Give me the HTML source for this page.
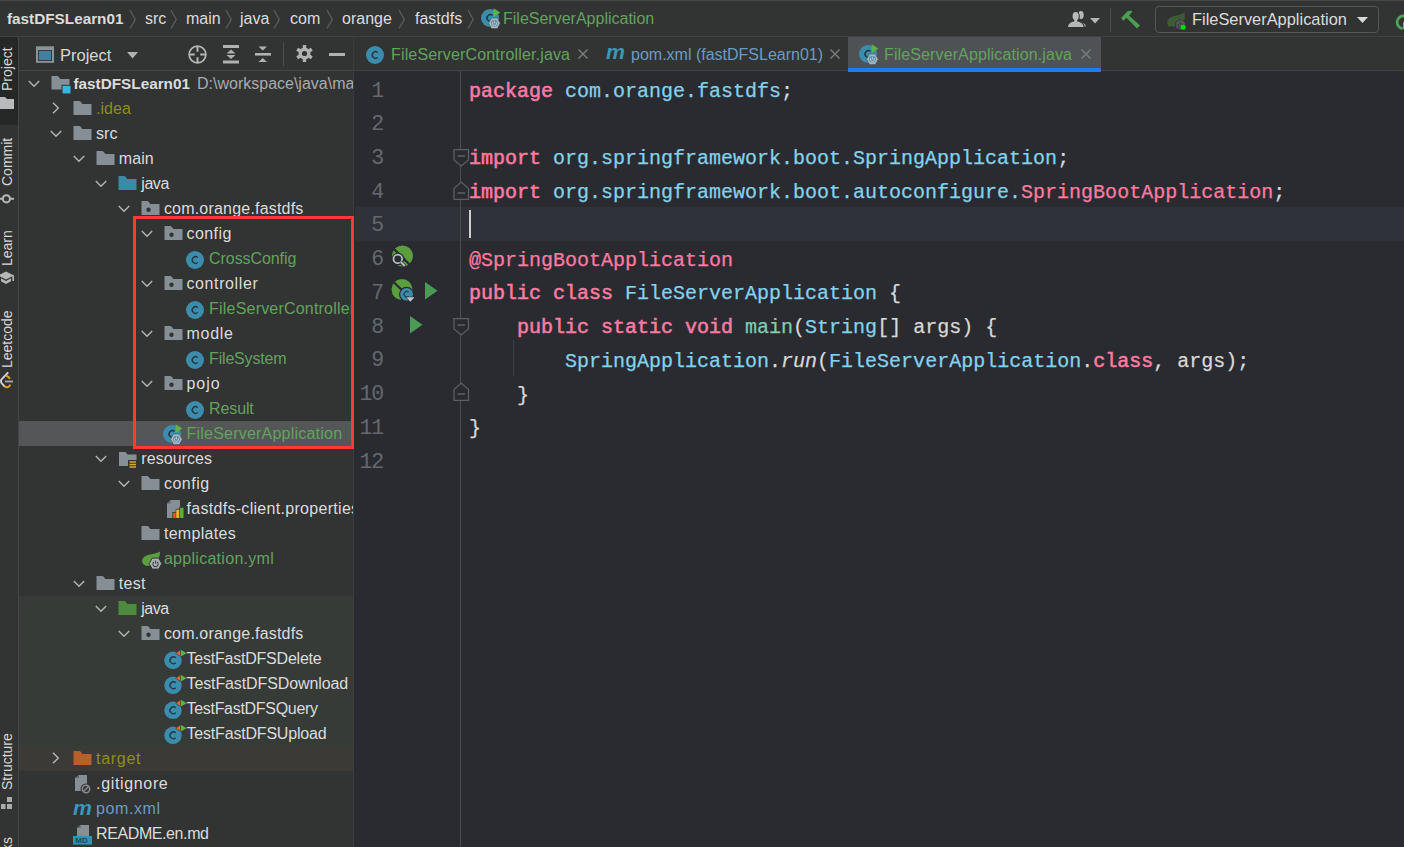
<!DOCTYPE html>
<html><head><meta charset="utf-8">
<style>
*{margin:0;padding:0;box-sizing:border-box}
html,body{width:1404px;height:847px;overflow:hidden;background:#323333}
body{position:relative;font-family:"Liberation Sans",sans-serif;font-size:16px;color:#d6d6d6}
.abs{position:absolute}
#nav{left:0;top:0;width:1404px;height:36px;background:#323433;border-top:1px solid #474747}
#navsep{left:0;top:36px;width:1404px;height:1px;background:#3f4142}
.crumb{position:absolute;top:7px;line-height:22px;font-size:16px;color:#dcdcdc;white-space:nowrap}
.chev{position:absolute;top:9px;width:8px;height:19px;margin-left:-1px}
#strip{left:0;top:37px;width:18px;height:810px;background:#323433}
#stripsep{left:18px;top:37px;width:1px;height:810px;background:#444647}
.vt{position:absolute;left:0px;transform-origin:0 0;transform:rotate(-90deg);font-size:14px;color:#d8d8d8;white-space:nowrap;line-height:14px}
#proj{left:19px;top:37px;width:335px;height:810px;background:#323333;overflow:hidden}
#projhead{left:0;top:0;width:335px;height:34px;border-bottom:1px solid #434547}
#projsep{left:353px;top:37px;width:1px;height:810px;background:#3b3c3e}
.row{position:absolute;left:0;width:335px;height:25px}
.row .t{position:absolute;top:2px;line-height:21px;font-size:16px;white-space:nowrap}
.row svg{position:absolute}
#editor{left:355px;top:37px;width:1049px;height:810px;background:#2a2b30}
#tabs{left:0;top:0;width:1049px;height:34px;background:#323433;border-bottom:1px solid #414344}
.tab{position:absolute;top:0;height:33px}
#tabs .t{position:absolute;top:7px;line-height:22px;font-size:16px;white-space:nowrap}
.code{-webkit-text-stroke:0.25px currentColor;position:absolute;left:114px;font-family:"Liberation Mono",monospace;font-size:20px;line-height:33.73px;white-space:pre;color:#d8d8d8}
.ln{position:absolute;width:40px;text-align:right;font-family:"Liberation Mono",monospace;font-size:21.5px;letter-spacing:-1.1px;line-height:33.73px;color:#65686e}
.kw{color:#ff7aa2;-webkit-text-stroke:0.55px currentColor}
.pk{color:#82d2ee}
.an{color:#ff7aa2}
.fn{color:#7fcfae}
.it{font-style:italic}
</style></head><body>

<!-- NAV BAR -->
<div id="nav" class="abs">
  <div class="crumb" style="left:7px;font-weight:bold;font-size:15.3px">fastDFSLearn01</div>
  <svg class="chev" style="left:130px" viewBox="0 0 8 19"><path d="M1 0.3 L6.3 9.4 L1 18.5" fill="none" stroke="#5c5f61" stroke-width="1.2"/></svg>
  <div class="crumb" style="left:145px">src</div>
  <svg class="chev" style="left:171px" viewBox="0 0 8 19"><path d="M1 0.3 L6.3 9.4 L1 18.5" fill="none" stroke="#5c5f61" stroke-width="1.2"/></svg>
  <div class="crumb" style="left:186px">main</div>
  <svg class="chev" style="left:226px" viewBox="0 0 8 19"><path d="M1 0.3 L6.3 9.4 L1 18.5" fill="none" stroke="#5c5f61" stroke-width="1.2"/></svg>
  <div class="crumb" style="left:240px">java</div>
  <svg class="chev" style="left:274px" viewBox="0 0 8 19"><path d="M1 0.3 L6.3 9.4 L1 18.5" fill="none" stroke="#5c5f61" stroke-width="1.2"/></svg>
  <div class="crumb" style="left:290px">com</div>
  <svg class="chev" style="left:327px" viewBox="0 0 8 19"><path d="M1 0.3 L6.3 9.4 L1 18.5" fill="none" stroke="#5c5f61" stroke-width="1.2"/></svg>
  <div class="crumb" style="left:342px">orange</div>
  <svg class="chev" style="left:399px" viewBox="0 0 8 19"><path d="M1 0.3 L6.3 9.4 L1 18.5" fill="none" stroke="#5c5f61" stroke-width="1.2"/></svg>
  <div class="crumb" style="left:415px">fastdfs</div>
  <svg class="chev" style="left:468px" viewBox="0 0 8 19"><path d="M1 0.3 L6.3 9.4 L1 18.5" fill="none" stroke="#5c5f61" stroke-width="1.2"/></svg>
  <svg class="abs" style="left:481px;top:7px" width="22" height="22" viewBox="0 0 22 22"><circle cx="9" cy="10" r="9" fill="#3c8dad"/><path d="M11.6 7.4 A3.4 3.4 0 1 0 11.6 12.6" fill="none" stroke="#22343e" stroke-width="1.4"/><path d="M12.6 0.2 L19.3 4.6 L12.6 8.9 Z" fill="#5fb246"/><path d="M7.6 15.3 L10.5 10.1 L16.3 10.1 L19.2 15.3 L16.3 20.5 L10.5 20.5 Z" fill="#aeb6bc" stroke="#3a4a52" stroke-width="0.5"/><circle cx="13.4" cy="15.3" r="3.3" fill="#3c8dad"/><path d="M12.1 14 A2 2 0 1 0 14.7 14 M13.4 12.6 V15.4" fill="none" stroke="#b8c0c6" stroke-width="1.1"/></svg>
  <div class="crumb" style="left:503px;color:#62a35c">FileServerApplication</div>

  <!-- right toolbar -->
  <svg class="abs" style="left:1067px;top:8px" width="20" height="20" viewBox="0 0 20 20">
    <ellipse cx="14" cy="6" rx="2.7" ry="4" fill="#b5b7b9"/><path d="M11.5 12.2 Q16.5 12.6 19 17 L17 17.8 L12 17.8 Z" fill="#b5b7b9"/>
    <g fill="#323433" stroke="#323433" stroke-width="2.2"><ellipse cx="8.7" cy="7.2" rx="3.1" ry="4.1"/><path d="M1 18 Q1.2 13.4 6.8 12.4 H10.6 Q16.2 13.4 16.6 18 Z"/></g>
    <g fill="#b5b7b9"><ellipse cx="8.7" cy="7.2" rx="3.1" ry="4.1"/><rect x="7.3" y="10" width="2.8" height="3"/><path d="M1 18 Q1.2 13.4 6.8 12.4 H10.6 Q16.2 13.4 16.6 18 Z"/></g>
  </svg>
  <svg class="abs" style="left:1090px;top:17px" width="10" height="6" viewBox="0 0 10 6"><path d="M0 0 H10 L5 5.5 Z" fill="#b4b6b8"/></svg>
  <div class="abs" style="left:1110px;top:7px;width:1px;height:24px;background:#4b4d4f"></div>
  <svg class="abs" style="left:1120px;top:9px" width="21" height="20" viewBox="0 0 21 20">
    <path d="M1.1 8.1 L3.3 10.7 L6.5 7.8 L17 18.6 L20 15.6 L9 5.6 L12.2 1.9 L11.6 0.8 L7.8 1.1 Z" fill="#4b9e52"/>
  </svg>
  <div class="abs" style="left:1155px;top:5px;width:224px;height:27px;border:1px solid #555759;border-radius:4px;background:#313333"></div>
  <svg class="abs" style="left:1166px;top:10px" width="22" height="21" viewBox="0 0 22 21">
    <path d="M2.5 15.5 C-0.5 11 2 6 8.5 5 C13 4.3 16 3 18.6 1.5 L18.8 8 Q17 13 10 15.5 Z" fill="#3d5a37"/>
    <path d="M14.4 8.3 L19.2 11.05 L19.2 16.55 L14.4 19.3 L9.6 16.55 L9.6 11.05 Z" fill="#53575a" stroke="#2f3132" stroke-width="0.8"/>
    <path d="M12.6 12.6 A2.4 2.4 0 1 0 16.2 12.6 M14.4 11 V13.8" fill="none" stroke="#35383a" stroke-width="1"/>
    <circle cx="17.2" cy="16.2" r="2.5" fill="#00dd00"/>
  </svg>
  <div class="crumb" style="left:1192px;font-size:16.4px;color:#dcdcdc">FileServerApplication</div>
  <svg class="abs" style="left:1357px;top:16px" width="11" height="7" viewBox="0 0 11 7"><path d="M0 0 H11 L5.5 6 Z" fill="#d6d8da"/></svg>
  <svg class="abs" style="left:1393px;top:13px" width="12" height="17" viewBox="0 0 12 17"><path d="M11.5 2 A6.3 6.3 0 1 0 9.5 14.6" fill="none" stroke="#4ea455" stroke-width="2.8"/></svg>
  <div class="abs" style="left:1403px;top:21px;width:1px;height:7px;background:#9a9c9e"></div>
</div>
<div id="navsep" class="abs"></div>

<!-- LEFT STRIP -->
<div id="strip" class="abs">
  <div class="abs" style="left:0;top:0;width:18px;height:88px;background:#262827"></div>
  <div class="vt" style="top:54px">Project</div>
  <svg class="abs" style="left:0;top:60px" width="14" height="13" viewBox="0 0 14 13"><path d="M0 0 H5 L7 2 H14 V12 H0 Z" fill="#b8babb"/></svg>
  <div class="vt" style="top:149px">Commit</div>
  <svg class="abs" style="left:0;top:155px" width="15" height="14" viewBox="0 0 15 14"><circle cx="6.4" cy="6.8" r="3.6" fill="none" stroke="#b4b6b8" stroke-width="2.1"/><path d="M0 6.8 H2.6 M10.2 6.8 H14" stroke="#b4b6b8" stroke-width="2.1"/></svg>
  <div class="vt" style="top:229px">Learn</div>
  <svg class="abs" style="left:0;top:234px" width="15" height="14" viewBox="0 0 15 14"><path d="M6 0.6 L14 4.4 L6 8.6 L-2 4.4 Z" fill="#b4b6b8"/><path d="M1 7.3 L6 10 L11 7.3 V10.3 L6 13 L1 10.3 Z" fill="#b4b6b8"/><rect x="12.4" y="4.4" width="1.6" height="5.6" fill="#b4b6b8"/></svg>
  <div class="vt" style="top:331px">Leetcode</div>
  <svg class="abs" style="left:0;top:333px" width="15" height="20" viewBox="0 0 15 20"><path d="M8.2 2.3 L1.6 9.3 Q0.2 11.3 1.8 13.3 L4.8 16.6" fill="none" stroke="#d2d4d6" stroke-width="1.9"/><path d="M6.3 5.6 Q8.8 6.8 10 8.8" fill="none" stroke="#f0a020" stroke-width="1.9"/><path d="M4.8 16.6 Q8.2 18.6 10.4 14.6" fill="none" stroke="#f0a020" stroke-width="1.9"/><path d="M5 11.5 H13" stroke="#a9abad" stroke-width="1.8"/></svg>
  <div class="vt" style="top:753px">Structure</div>
  <svg class="abs" style="left:0;top:760px" width="13" height="13" viewBox="0 0 13 13"><rect x="7" y="0" width="5" height="5" fill="#a9abad"/><rect x="1" y="7" width="4.5" height="5" fill="#a9abad"/><rect x="7" y="7" width="5" height="5" fill="#a9abad"/></svg>
  <div class="vt" style="top:869.5px">Bookmarks</div>
</div>
<div id="stripsep" class="abs"></div>

<!-- PROJECT PANEL -->
<div id="proj" class="abs">
  <div id="projhead" class="abs">
    <svg class="abs" style="left:16px;top:9px" width="20" height="18" viewBox="0 0 20 18"><rect x="1" y="0.3" width="18" height="16.5" fill="#8a949b"/><rect x="3" y="4" width="14" height="11" fill="#34393c"/><rect x="4" y="5" width="12" height="9" fill="#3b84a0"/></svg>
    <div class="abs" style="left:41px;top:7px;line-height:22px;font-size:16.5px;color:#d8d8d8">Project</div>
    <svg class="abs" style="left:108px;top:15px" width="11" height="7" viewBox="0 0 11 7"><path d="M0 0 H11 L5.5 6.5 Z" fill="#b0b2b4"/></svg>
    <!-- locate -->
    <svg class="abs" style="left:169px;top:8px" width="19" height="19" viewBox="0 0 19 19"><circle cx="9.5" cy="9.5" r="8.4" fill="none" stroke="#b4b6b8" stroke-width="1.7"/><path d="M9.5 1.5 V6.8 M9.5 12.2 V17.5 M1.5 9.5 H6.8 M12.2 9.5 H17.5" stroke="#b4b6b8" stroke-width="2"/></svg>
    <!-- expand -->
    <svg class="abs" style="left:204px;top:8px" width="16" height="19" viewBox="0 0 16 19"><rect x="0" y="0" width="16" height="3" fill="#afb1b3"/><rect x="0" y="15.5" width="16" height="3" fill="#afb1b3"/><path d="M3.5 8.5 L8 4.5 L12.5 8.5 Z M3.5 10 L8 14 L12.5 10 Z" fill="#afb1b3"/></svg>
    <!-- collapse -->
    <svg class="abs" style="left:236px;top:8px" width="16" height="19" viewBox="0 0 16 19"><path d="M3.5 1.5 L12 1.5 L7.75 5.5 Z M3.5 17 L12 17 L7.75 13 Z" fill="#afb1b3"/><rect x="0" y="8" width="16" height="2.6" fill="#afb1b3"/></svg>
    <div class="abs" style="left:264px;top:5px;width:1px;height:24px;background:#4b4d4f"></div>
    <!-- gear -->
    <svg class="abs" style="left:277px;top:8px" width="17" height="17" viewBox="0 0 17 17"><g fill="#afb1b3"><circle cx="8.5" cy="8.5" r="6"/><rect x="6.8" y="0" width="3.4" height="17"/><rect x="6.8" y="0" width="3.4" height="17" transform="rotate(60 8.5 8.5)"/><rect x="6.8" y="0" width="3.4" height="17" transform="rotate(120 8.5 8.5)"/></g><circle cx="8.5" cy="8.5" r="2.6" fill="#323333"/></svg>
    <div class="abs" style="left:310px;top:16px;width:16px;height:3px;background:#afb1b3"></div>
  </div>
  <div id="tree" class="abs" style="left:0;top:34px;width:335px;height:776px">
<div class="row" style="top:0px;"><div class="abs" style="left:8.5px;top:9px"><svg width="12" height="8" viewBox="0 0 12 8"><path d="M0.8 1 L6 6.3 L11.2 1" fill="none" stroke="#b4b6b8" stroke-width="1.4"/></svg></div><div class="abs" style="left:31.5px;top:4px;line-height:0"><svg width="22" height="20" viewBox="0 0 22 20"><path d="M0.5 1 H6.3 Q7.5 1 8.3 2.5 L9.2 4 H18.5 V14.5 H0.5 Z" fill="#878f96"/><rect x="10.5" y="9.8" width="9.5" height="9.2" fill="#323333"/><rect x="11.5" y="10.8" width="8" height="7.6" fill="#3ab4e0"/></svg></div><div class="t" style="left:54.5px;color:#dcdcdc;font-weight:bold;font-size:15.3px;letter-spacing:0px">fastDFSLearn01</div><div class="t" style="left:178px;color:#a9abad">D:\workspace\java\mavenProjects\fastDFSLearn01</div></div>
<div class="row" style="top:25px;"><div class="abs" style="left:33.1px;top:6px"><svg width="8" height="12" viewBox="0 0 8 12"><path d="M1 0.8 L6.3 6 L1 11.2" fill="none" stroke="#b4b6b8" stroke-width="1.4"/></svg></div><div class="abs" style="left:54.1px;top:4px;line-height:0"><svg width="20" height="18" viewBox="0 0 20 18"><path d="M0.5 1.1 H6.3 Q7.5 1.1 8.3 2.6 L9.2 4.1 H18.5 V15 H0.5 Z" fill="#878f96"/></svg></div><div class="t" style="left:77.1px;color:#8d8e1e;letter-spacing:0px">.idea</div></div>
<div class="row" style="top:50px;"><div class="abs" style="left:31.1px;top:9px"><svg width="12" height="8" viewBox="0 0 12 8"><path d="M0.8 1 L6 6.3 L11.2 1" fill="none" stroke="#b4b6b8" stroke-width="1.4"/></svg></div><div class="abs" style="left:54.1px;top:4px;line-height:0"><svg width="20" height="18" viewBox="0 0 20 18"><path d="M0.5 1.1 H6.3 Q7.5 1.1 8.3 2.6 L9.2 4.1 H18.5 V15 H0.5 Z" fill="#878f96"/></svg></div><div class="t" style="left:77.1px;color:#dcdcdc;letter-spacing:0px">src</div></div>
<div class="row" style="top:75px;"><div class="abs" style="left:53.7px;top:9px"><svg width="12" height="8" viewBox="0 0 12 8"><path d="M0.8 1 L6 6.3 L11.2 1" fill="none" stroke="#b4b6b8" stroke-width="1.4"/></svg></div><div class="abs" style="left:76.7px;top:4px;line-height:0"><svg width="20" height="18" viewBox="0 0 20 18"><path d="M0.5 1.1 H6.3 Q7.5 1.1 8.3 2.6 L9.2 4.1 H18.5 V15 H0.5 Z" fill="#878f96"/></svg></div><div class="t" style="left:99.7px;color:#dcdcdc;letter-spacing:0.13px">main</div></div>
<div class="row" style="top:100px;"><div class="abs" style="left:76.3px;top:9px"><svg width="12" height="8" viewBox="0 0 12 8"><path d="M0.8 1 L6 6.3 L11.2 1" fill="none" stroke="#b4b6b8" stroke-width="1.4"/></svg></div><div class="abs" style="left:99.3px;top:4px;line-height:0"><svg width="20" height="18" viewBox="0 0 20 18"><path d="M0.5 1.1 H6.3 Q7.5 1.1 8.3 2.6 L9.2 4.1 H18.5 V15 H0.5 Z" fill="#3b8aa6"/></svg></div><div class="t" style="left:122.3px;color:#dcdcdc;letter-spacing:-0.45px">java</div></div>
<div class="row" style="top:125px;"><div class="abs" style="left:98.9px;top:9px"><svg width="12" height="8" viewBox="0 0 12 8"><path d="M0.8 1 L6 6.3 L11.2 1" fill="none" stroke="#b4b6b8" stroke-width="1.4"/></svg></div><div class="abs" style="left:121.9px;top:4px;line-height:0"><svg width="20" height="18" viewBox="0 0 20 18"><path d="M0.5 1.1 H6.3 Q7.5 1.1 8.3 2.6 L9.2 4.1 H18.5 V15 H0.5 Z" fill="#878f96"/><circle cx="7.5" cy="9.8" r="2.2" fill="#323333"/></svg></div><div class="t" style="left:144.9px;color:#dcdcdc;letter-spacing:0.2px">com.orange.fastdfs</div></div>
<div class="row" style="top:150px;"><div class="abs" style="left:121.5px;top:9px"><svg width="12" height="8" viewBox="0 0 12 8"><path d="M0.8 1 L6 6.3 L11.2 1" fill="none" stroke="#b4b6b8" stroke-width="1.4"/></svg></div><div class="abs" style="left:144.5px;top:4px;line-height:0"><svg width="20" height="18" viewBox="0 0 20 18"><path d="M0.5 1.1 H6.3 Q7.5 1.1 8.3 2.6 L9.2 4.1 H18.5 V15 H0.5 Z" fill="#878f96"/><circle cx="7.5" cy="9.8" r="2.2" fill="#323333"/></svg></div><div class="t" style="left:167.5px;color:#dcdcdc;letter-spacing:0.42px">config</div></div>
<div class="row" style="top:175px;"><div class="abs" style="left:167.1px;top:4px;line-height:0"><svg width="20" height="20" viewBox="0 0 20 20"><circle cx="9" cy="10" r="9" fill="#3c8dad"/><path d="M11.8 7.6 A3.3 3.3 0 1 0 11.8 12.4" fill="none" stroke="#22343e" stroke-width="1.3"/></svg></div><div class="t" style="left:190.1px;color:#62a35c;letter-spacing:-0.08px">CrossConfig</div></div>
<div class="row" style="top:200px;"><div class="abs" style="left:121.5px;top:9px"><svg width="12" height="8" viewBox="0 0 12 8"><path d="M0.8 1 L6 6.3 L11.2 1" fill="none" stroke="#b4b6b8" stroke-width="1.4"/></svg></div><div class="abs" style="left:144.5px;top:4px;line-height:0"><svg width="20" height="18" viewBox="0 0 20 18"><path d="M0.5 1.1 H6.3 Q7.5 1.1 8.3 2.6 L9.2 4.1 H18.5 V15 H0.5 Z" fill="#878f96"/><circle cx="7.5" cy="9.8" r="2.2" fill="#323333"/></svg></div><div class="t" style="left:167.5px;color:#dcdcdc;letter-spacing:0.6px">controller</div></div>
<div class="row" style="top:225px;"><div class="abs" style="left:167.1px;top:4px;line-height:0"><svg width="20" height="20" viewBox="0 0 20 20"><circle cx="9" cy="10" r="9" fill="#3c8dad"/><path d="M11.8 7.6 A3.3 3.3 0 1 0 11.8 12.4" fill="none" stroke="#22343e" stroke-width="1.3"/></svg></div><div class="t" style="left:190.1px;color:#62a35c;letter-spacing:0.2px">FileServerController</div></div>
<div class="row" style="top:250px;"><div class="abs" style="left:121.5px;top:9px"><svg width="12" height="8" viewBox="0 0 12 8"><path d="M0.8 1 L6 6.3 L11.2 1" fill="none" stroke="#b4b6b8" stroke-width="1.4"/></svg></div><div class="abs" style="left:144.5px;top:4px;line-height:0"><svg width="20" height="18" viewBox="0 0 20 18"><path d="M0.5 1.1 H6.3 Q7.5 1.1 8.3 2.6 L9.2 4.1 H18.5 V15 H0.5 Z" fill="#878f96"/><circle cx="7.5" cy="9.8" r="2.2" fill="#323333"/></svg></div><div class="t" style="left:167.5px;color:#dcdcdc;letter-spacing:0.7px">modle</div></div>
<div class="row" style="top:275px;"><div class="abs" style="left:167.1px;top:4px;line-height:0"><svg width="20" height="20" viewBox="0 0 20 20"><circle cx="9" cy="10" r="9" fill="#3c8dad"/><path d="M11.8 7.6 A3.3 3.3 0 1 0 11.8 12.4" fill="none" stroke="#22343e" stroke-width="1.3"/></svg></div><div class="t" style="left:190.1px;color:#62a35c;letter-spacing:-0.19px">FileSystem</div></div>
<div class="row" style="top:300px;"><div class="abs" style="left:121.5px;top:9px"><svg width="12" height="8" viewBox="0 0 12 8"><path d="M0.8 1 L6 6.3 L11.2 1" fill="none" stroke="#b4b6b8" stroke-width="1.4"/></svg></div><div class="abs" style="left:144.5px;top:4px;line-height:0"><svg width="20" height="18" viewBox="0 0 20 18"><path d="M0.5 1.1 H6.3 Q7.5 1.1 8.3 2.6 L9.2 4.1 H18.5 V15 H0.5 Z" fill="#878f96"/><circle cx="7.5" cy="9.8" r="2.2" fill="#323333"/></svg></div><div class="t" style="left:167.5px;color:#dcdcdc;letter-spacing:0.95px">pojo</div></div>
<div class="row" style="top:325px;"><div class="abs" style="left:167.1px;top:4px;line-height:0"><svg width="20" height="20" viewBox="0 0 20 20"><circle cx="9" cy="10" r="9" fill="#3c8dad"/><path d="M11.8 7.6 A3.3 3.3 0 1 0 11.8 12.4" fill="none" stroke="#22343e" stroke-width="1.3"/></svg></div><div class="t" style="left:190.1px;color:#62a35c;letter-spacing:-0.14px">Result</div></div>
<div class="row" style="top:350px;background:#555658;"><div class="abs" style="left:143.5px;top:3px;line-height:0"><svg width="22" height="22" viewBox="0 0 22 22"><circle cx="9" cy="10" r="9" fill="#3c8dad"/><path d="M11.6 7.4 A3.4 3.4 0 1 0 11.6 12.6" fill="none" stroke="#22343e" stroke-width="1.4"/><path d="M12.6 0.2 L19.3 4.6 L12.6 8.9 Z" fill="#5fb246"/><path d="M7.6 15.3 L10.5 10.1 L16.3 10.1 L19.2 15.3 L16.3 20.5 L10.5 20.5 Z" fill="#aeb6bc" stroke="#3a4a52" stroke-width="0.5"/><circle cx="13.4" cy="15.3" r="3.3" fill="#3c8dad"/><path d="M12.1 14 A2 2 0 1 0 14.7 14 M13.4 12.6 V15.4" fill="none" stroke="#b8c0c6" stroke-width="1.1"/></svg></div><div class="t" style="left:167.5px;color:#62a35c;letter-spacing:0.22px">FileServerApplication</div></div>
<div class="row" style="top:375px;"><div class="abs" style="left:76.3px;top:9px"><svg width="12" height="8" viewBox="0 0 12 8"><path d="M0.8 1 L6 6.3 L11.2 1" fill="none" stroke="#b4b6b8" stroke-width="1.4"/></svg></div><div class="abs" style="left:99.3px;top:4px;line-height:0"><svg width="20" height="20" viewBox="0 0 20 20"><path d="M1 2 H7.5 L9.5 4.5 H18.5 V16 H1 Z" fill="#878f96"/><rect x="10" y="10" width="10" height="10" fill="#323333"/><path d="M11.5 12 H18 M11.5 14.5 H18 M11.5 17 H18" stroke="#d9a836" stroke-width="1.5"/></svg></div><div class="t" style="left:122.3px;color:#dcdcdc;letter-spacing:0.06px">resources</div></div>
<div class="row" style="top:400px;"><div class="abs" style="left:98.9px;top:9px"><svg width="12" height="8" viewBox="0 0 12 8"><path d="M0.8 1 L6 6.3 L11.2 1" fill="none" stroke="#b4b6b8" stroke-width="1.4"/></svg></div><div class="abs" style="left:121.9px;top:4px;line-height:0"><svg width="20" height="18" viewBox="0 0 20 18"><path d="M0.5 1.1 H6.3 Q7.5 1.1 8.3 2.6 L9.2 4.1 H18.5 V15 H0.5 Z" fill="#878f96"/></svg></div><div class="t" style="left:144.9px;color:#dcdcdc;letter-spacing:0.5px">config</div></div>
<div class="row" style="top:425px;"><div class="abs" style="left:144.5px;top:4px;line-height:0"><svg width="22" height="20" viewBox="0 0 22 20"><path d="M3 3.6 L6.6 0 H16 V18 H3 Z" fill="#878f96"/><path d="M3 3.6 H6.6 V0 Z" fill="#5f666b"/><path d="M8.4 11.9 H11.7 V8.8 H15.3 V7 H20.3 V18.8 H8.4 Z" fill="#323333"/><rect x="9.2" y="12.7" width="2.5" height="5.3" fill="#e8601c"/><rect x="12.2" y="9.6" width="3.1" height="8.4" fill="#f0b030"/><rect x="16.1" y="7.8" width="3.4" height="10.2" fill="#59b33c"/></svg></div><div class="t" style="left:167.5px;color:#dcdcdc;letter-spacing:0.3px">fastdfs-client.properties</div></div>
<div class="row" style="top:450px;"><div class="abs" style="left:121.9px;top:4px;line-height:0"><svg width="20" height="18" viewBox="0 0 20 18"><path d="M0.5 1.1 H6.3 Q7.5 1.1 8.3 2.6 L9.2 4.1 H18.5 V15 H0.5 Z" fill="#878f96"/></svg></div><div class="t" style="left:144.9px;color:#dcdcdc;letter-spacing:0.31px">templates</div></div>
<div class="row" style="top:475px;"><div class="abs" style="left:121.9px;top:4px;line-height:0"><svg width="22" height="20" viewBox="0 0 22 20"><path d="M1.5 13 C0 9 3 5.5 9 4.5 C13 3.8 16.5 3 19 1.5 C19 6 18 10 13 13.5 C9 16.5 4 17 1.5 13 Z" fill="#5a9e3e"/><path d="M8.2 13.6 L11.35 8.1 L17.65 8.1 L20.8 13.6 L17.65 19.1 L11.35 19.1 Z" fill="#aab1b6" stroke="#323333" stroke-width="1"/><path d="M12.9 12 A2.6 2.6 0 1 0 16.1 12 M14.5 10.4 V13.6" fill="none" stroke="#3b3e40" stroke-width="1.1"/></svg></div><div class="t" style="left:144.9px;color:#62a35c;letter-spacing:0.29px">application.yml</div></div>
<div class="row" style="top:500px;"><div class="abs" style="left:53.7px;top:9px"><svg width="12" height="8" viewBox="0 0 12 8"><path d="M0.8 1 L6 6.3 L11.2 1" fill="none" stroke="#b4b6b8" stroke-width="1.4"/></svg></div><div class="abs" style="left:76.7px;top:4px;line-height:0"><svg width="20" height="18" viewBox="0 0 20 18"><path d="M0.5 1.1 H6.3 Q7.5 1.1 8.3 2.6 L9.2 4.1 H18.5 V15 H0.5 Z" fill="#878f96"/></svg></div><div class="t" style="left:99.7px;color:#dcdcdc;letter-spacing:0.33px">test</div></div>
<div class="row" style="top:525px;background:#373b37;"><div class="abs" style="left:76.3px;top:9px"><svg width="12" height="8" viewBox="0 0 12 8"><path d="M0.8 1 L6 6.3 L11.2 1" fill="none" stroke="#b4b6b8" stroke-width="1.4"/></svg></div><div class="abs" style="left:99.3px;top:4px;line-height:0"><svg width="20" height="18" viewBox="0 0 20 18"><path d="M0.5 1.1 H6.3 Q7.5 1.1 8.3 2.6 L9.2 4.1 H18.5 V15 H0.5 Z" fill="#4e8a3e"/></svg></div><div class="t" style="left:122.3px;color:#dcdcdc;letter-spacing:-0.5px">java</div></div>
<div class="row" style="top:550px;background:#373b37;"><div class="abs" style="left:98.9px;top:9px"><svg width="12" height="8" viewBox="0 0 12 8"><path d="M0.8 1 L6 6.3 L11.2 1" fill="none" stroke="#b4b6b8" stroke-width="1.4"/></svg></div><div class="abs" style="left:121.9px;top:4px;line-height:0"><svg width="20" height="18" viewBox="0 0 20 18"><path d="M0.5 1.1 H6.3 Q7.5 1.1 8.3 2.6 L9.2 4.1 H18.5 V15 H0.5 Z" fill="#878f96"/><circle cx="7.5" cy="9.8" r="2.2" fill="#323333"/></svg></div><div class="t" style="left:144.9px;color:#dcdcdc;letter-spacing:0.2px">com.orange.fastdfs</div></div>
<div class="row" style="top:575px;background:#373b37;"><div class="abs" style="left:144.5px;top:4px;line-height:0"><svg width="24" height="22" viewBox="0 0 24 22" style="margin-top:-2px"><circle cx="9" cy="12.3" r="8.7" fill="#3c8dad"/><path d="M11.7 9.8 A3.4 3.4 0 1 0 11.7 14.8" fill="none" stroke="#22343e" stroke-width="1.3"/><path d="M11.3 5.2 L16.4 1.6 L16.4 8.8 Z" fill="#2f3331"/><path d="M12 5.2 L16.2 2.3 L16.2 8.1 Z" fill="#e0662c"/><path d="M16.8 1.8 L22.6 5.2 L16.8 8.6 Z" fill="#5fb246"/></svg></div><div class="t" style="left:167.5px;color:#dcdcdc;letter-spacing:-0.22px">TestFastDFSDelete</div></div>
<div class="row" style="top:600px;background:#373b37;"><div class="abs" style="left:144.5px;top:4px;line-height:0"><svg width="24" height="22" viewBox="0 0 24 22" style="margin-top:-2px"><circle cx="9" cy="12.3" r="8.7" fill="#3c8dad"/><path d="M11.7 9.8 A3.4 3.4 0 1 0 11.7 14.8" fill="none" stroke="#22343e" stroke-width="1.3"/><path d="M11.3 5.2 L16.4 1.6 L16.4 8.8 Z" fill="#2f3331"/><path d="M12 5.2 L16.2 2.3 L16.2 8.1 Z" fill="#e0662c"/><path d="M16.8 1.8 L22.6 5.2 L16.8 8.6 Z" fill="#5fb246"/></svg></div><div class="t" style="left:167.5px;color:#dcdcdc;letter-spacing:-0.11px">TestFastDFSDownload</div></div>
<div class="row" style="top:625px;background:#373b37;"><div class="abs" style="left:144.5px;top:4px;line-height:0"><svg width="24" height="22" viewBox="0 0 24 22" style="margin-top:-2px"><circle cx="9" cy="12.3" r="8.7" fill="#3c8dad"/><path d="M11.7 9.8 A3.4 3.4 0 1 0 11.7 14.8" fill="none" stroke="#22343e" stroke-width="1.3"/><path d="M11.3 5.2 L16.4 1.6 L16.4 8.8 Z" fill="#2f3331"/><path d="M12 5.2 L16.2 2.3 L16.2 8.1 Z" fill="#e0662c"/><path d="M16.8 1.8 L22.6 5.2 L16.8 8.6 Z" fill="#5fb246"/></svg></div><div class="t" style="left:167.5px;color:#dcdcdc;letter-spacing:-0.3px">TestFastDFSQuery</div></div>
<div class="row" style="top:650px;background:#373b37;"><div class="abs" style="left:144.5px;top:4px;line-height:0"><svg width="24" height="22" viewBox="0 0 24 22" style="margin-top:-2px"><circle cx="9" cy="12.3" r="8.7" fill="#3c8dad"/><path d="M11.7 9.8 A3.4 3.4 0 1 0 11.7 14.8" fill="none" stroke="#22343e" stroke-width="1.3"/><path d="M11.3 5.2 L16.4 1.6 L16.4 8.8 Z" fill="#2f3331"/><path d="M12 5.2 L16.2 2.3 L16.2 8.1 Z" fill="#e0662c"/><path d="M16.8 1.8 L22.6 5.2 L16.8 8.6 Z" fill="#5fb246"/></svg></div><div class="t" style="left:167.5px;color:#dcdcdc;letter-spacing:-0.19px">TestFastDFSUpload</div></div>
<div class="row" style="top:675px;background:#3c3a36;"><div class="abs" style="left:33.1px;top:6px"><svg width="8" height="12" viewBox="0 0 8 12"><path d="M1 0.8 L6.3 6 L1 11.2" fill="none" stroke="#b4b6b8" stroke-width="1.4"/></svg></div><div class="abs" style="left:54.1px;top:4px;line-height:0"><svg width="20" height="18" viewBox="0 0 20 18"><path d="M0.5 1.1 H6.3 Q7.5 1.1 8.3 2.6 L9.2 4.1 H18.5 V15 H0.5 Z" fill="#b65f2b"/></svg></div><div class="t" style="left:77.1px;color:#8d8e1e;letter-spacing:0.7px">target</div></div>
<div class="row" style="top:700px;"><div class="abs" style="left:54.1px;top:4px;line-height:0"><svg width="20" height="20" viewBox="0 0 20 20"><path d="M2 3 L6 0 H14 V16 H2 Z" fill="#878f96"/><path d="M2 3 H6 V0" fill="#5f666b"/><circle cx="13" cy="14" r="5.5" fill="#323333"/><circle cx="13" cy="14" r="3.7" fill="none" stroke="#878f96" stroke-width="1.5"/><path d="M10.5 16.5 L15.5 11.5" stroke="#878f96" stroke-width="1.5"/></svg></div><div class="t" style="left:77.1px;color:#dcdcdc;letter-spacing:0.65px">.gitignore</div></div>
<div class="row" style="top:725px;"><div class="abs" style="left:54.1px;top:4px;line-height:0"><svg width="22" height="20" viewBox="0 0 22 20"><text x="0" y="15" font-family="Liberation Sans" font-size="21" font-weight="bold" font-style="italic" fill="#3a97b8" textLength="19" lengthAdjust="spacingAndGlyphs">m</text></svg></div><div class="t" style="left:77.1px;color:#6a9bc3;letter-spacing:0.58px">pom.xml</div></div>
<div class="row" style="top:750px;"><div class="abs" style="left:54.1px;top:4px;line-height:0"><svg width="22" height="22" viewBox="0 0 22 22"><path d="M4 3 L7.5 0 H16 V11 H4 Z" fill="#878f96"/><path d="M4 3 H7.5 V0 Z" fill="#5f666b"/><rect x="0" y="11" width="19" height="8.6" fill="#3192b3"/><text x="2.3" y="18.3" font-family="Liberation Sans" font-size="8" font-weight="bold" fill="#1d4a5a">MD</text></svg></div><div class="t" style="left:77.1px;color:#dcdcdc;letter-spacing:-0.41px">README.en.md</div></div>
  </div>
</div>
<div id="projsep" class="abs"></div>
<div class="abs" style="left:354px;top:37px;width:1px;height:33px;background:#323433"></div><div class="abs" style="left:354px;top:70px;width:1px;height:1px;background:#434547"></div><div class="abs" style="left:354px;top:71px;width:1px;height:776px;background:#2a2b30"></div>

<!-- EDITOR -->
<div id="editor" class="abs">
  <div id="tabs" class="abs"><div class="abs" style="left:11px;top:8px;line-height:0"><svg width="20" height="20" viewBox="0 0 20 20"><circle cx="9" cy="10" r="9" fill="#3c8dad"/><path d="M11.8 7.6 A3.3 3.3 0 1 0 11.8 12.4" fill="none" stroke="#22343e" stroke-width="1.3"/></svg></div><div class="t" style="left:36px;color:#62a35c"><span style="letter-spacing:0.16px">FileServerController.java</span></div><svg class="abs" style="left:223px;top:12px" width="10" height="10" viewBox="0 0 10 10"><path d="M0.5 0.5 L9.5 9.5 M9.5 0.5 L0.5 9.5" stroke="#7d7f81" stroke-width="1.3"/></svg><div class="abs" style="left:251px;top:7px;line-height:0"><svg width="22" height="20" viewBox="0 0 22 20"><text x="0" y="15" font-family="Liberation Sans" font-size="21" font-weight="bold" font-style="italic" fill="#3a97b8" textLength="19" lengthAdjust="spacingAndGlyphs">m</text></svg></div><div class="t" style="left:276px;color:#6a9bc3">pom.xml (fastDFSLearn01)</div><svg class="abs" style="left:475px;top:12px" width="10" height="10" viewBox="0 0 10 10"><path d="M0.5 0.5 L9.5 9.5 M9.5 0.5 L0.5 9.5" stroke="#7d7f81" stroke-width="1.3"/></svg><div class="abs" style="left:493px;top:0;width:253px;height:35px;background:#4e5254"></div><div class="abs" style="left:493px;top:31px;width:253px;height:4px;background:#1f7ce8"></div><div class="abs" style="left:504px;top:7px;line-height:0"><svg width="22" height="22" viewBox="0 0 22 22"><circle cx="9" cy="10" r="9" fill="#3c8dad"/><path d="M11.6 7.4 A3.4 3.4 0 1 0 11.6 12.6" fill="none" stroke="#22343e" stroke-width="1.4"/><path d="M12.6 0.2 L19.3 4.6 L12.6 8.9 Z" fill="#5fb246"/><path d="M7.6 15.3 L10.5 10.1 L16.3 10.1 L19.2 15.3 L16.3 20.5 L10.5 20.5 Z" fill="#aeb6bc" stroke="#3a4a52" stroke-width="0.5"/><circle cx="13.4" cy="15.3" r="3.3" fill="#3c8dad"/><path d="M12.1 14 A2 2 0 1 0 14.7 14 M13.4 12.6 V15.4" fill="none" stroke="#b8c0c6" stroke-width="1.1"/></svg></div><div class="t" style="left:529px;color:#62a35c"><span style="letter-spacing:0.12px">FileServerApplication.java</span></div><svg class="abs" style="left:726px;top:12px" width="10" height="10" viewBox="0 0 10 10"><path d="M0.5 0.5 L9.5 9.5 M9.5 0.5 L0.5 9.5" stroke="#7d7f81" stroke-width="1.3"/></svg></div>
  <div id="code" class="abs" style="left:0;top:34px;width:1049px;height:776px"><div class="abs" style="left:0;top:135.92px;width:1049px;height:34px;background:#303239"></div><div class="abs" style="left:105px;top:0;width:1px;height:776px;background:#4b4d52"></div><div class="ln" style="top:3.50px;left:-12px">1</div><div class="code" style="left:114px;top:4.00px"><span class="kw">package</span> <span class="pk">com.orange.fastdfs</span>;</div><div class="ln" style="top:37.23px;left:-12px">2</div><div class="code" style="left:114px;top:37.73px"></div><div class="ln" style="top:70.96px;left:-12px">3</div><div class="code" style="left:114px;top:71.46px"><span class="kw">import</span> <span class="pk">org.springframework.boot.SpringApplication</span>;</div><div class="ln" style="top:104.69px;left:-12px">4</div><div class="code" style="left:114px;top:105.19px"><span class="kw">import</span> <span class="pk">org.springframework.boot.autoconfigure.</span><span class="an">SpringBootApplication</span>;</div><div class="ln" style="top:138.42px;left:-12px">5</div><div class="code" style="left:114px;top:138.92px"></div><div class="ln" style="top:172.15px;left:-12px">6</div><div class="code" style="left:114px;top:172.65px"><span class="an">@SpringBootApplication</span></div><div class="ln" style="top:205.88px;left:-12px">7</div><div class="code" style="left:114px;top:206.38px"><span class="kw">public class</span> <span class="pk">FileServerApplication</span> {</div><div class="ln" style="top:239.61px;left:-12px">8</div><div class="code" style="left:114px;top:240.11px">    <span class="kw">public static void</span> <span class="fn">main</span>(<span class="pk">String</span>[] args) {</div><div class="ln" style="top:273.34px;left:-12px">9</div><div class="code" style="left:114px;top:273.84px">        <span class="pk">SpringApplication</span>.<span class="it">run</span>(<span class="pk">FileServerApplication</span>.<span class="kw">class</span>, args);</div><div class="ln" style="top:307.07px;left:-12px">10</div><div class="code" style="left:114px;top:307.57px">    }</div><div class="ln" style="top:340.80px;left:-12px">11</div><div class="code" style="left:114px;top:341.30px">}</div><div class="ln" style="top:374.53px;left:-12px">12</div><div class="code" style="left:114px;top:375.03px"></div><div class="abs" style="left:114px;top:138.92px;width:2px;height:28px;background:#cfcfcf"></div><svg class="abs" style="left:98px;top:78px" width="17" height="18" viewBox="0 0 17 18"><path d="M1 0.7 H15.5 V11 L8.25 17 L1 11 Z" fill="#2a2b30" stroke="#5b5e62" stroke-width="1.3"/><path d="M4.5 7 H12" stroke="#6a6d71" stroke-width="1.2"/></svg><svg class="abs" style="left:98px;top:110px" width="17" height="19" viewBox="0 0 17 19"><path d="M1 18.3 H15.5 V7.5 L8.25 1 L1 7.5 Z" fill="#2a2b30" stroke="#5b5e62" stroke-width="1.3"/><path d="M4.5 12 H12" stroke="#6a6d71" stroke-width="1.2"/></svg><svg class="abs" style="left:98px;top:247px" width="17" height="18" viewBox="0 0 17 18"><path d="M1 0.7 H15.5 V11 L8.25 17 L1 11 Z" fill="#2a2b30" stroke="#5b5e62" stroke-width="1.3"/><path d="M4.5 7 H12" stroke="#6a6d71" stroke-width="1.2"/></svg><svg class="abs" style="left:98px;top:311px" width="17" height="19" viewBox="0 0 17 19"><path d="M1 18.3 H15.5 V7.5 L8.25 1 L1 7.5 Z" fill="#2a2b30" stroke="#5b5e62" stroke-width="1.3"/><path d="M4.5 12 H12" stroke="#6a6d71" stroke-width="1.2"/></svg><div class="abs" style="left:158px;top:269px;width:1px;height:36px;background:#3c3e44"></div><svg class="abs" style="left:36px;top:174px" width="24" height="24" viewBox="0 0 24 24">
<circle cx="11.5" cy="11" r="10.5" fill="#5a9e3e"/>
<path d="M1.5 2.5 L20.5 21.5" stroke="#2a2b30" stroke-width="2.3"/>
<circle cx="7" cy="14" r="6.3" fill="#2a2b30"/>
<circle cx="6.8" cy="13.9" r="4.3" fill="none" stroke="#b6bfc5" stroke-width="1.8"/>
<path d="M9.5 17 L14 21.5" stroke="#2a2b30" stroke-width="3.6"/>
<path d="M9.8 17 L13.8 21" stroke="#b6bfc5" stroke-width="2"/>
</svg><svg class="abs" style="left:36px;top:207px" width="26" height="26" viewBox="0 0 26 26">
<circle cx="11" cy="11.5" r="10.5" fill="#5a9e3e"/>
<path d="M2 3.5 L14 15" stroke="#2a2b30" stroke-width="2.3"/>
<circle cx="15.6" cy="16.3" r="7.6" fill="#2a2b30"/>
<circle cx="15.6" cy="16.3" r="6.3" fill="#3c8dad"/>
<path d="M17.6 14.3 A2.7 2.7 0 1 0 17.6 18.3" fill="none" stroke="#24414e" stroke-width="1.2"/>
<path d="M14 18.8 H24.5 L19.25 24 Z" fill="#2a2b30"/>
<path d="M15.3 19.2 H23.5 L19.4 23.8 Z" fill="#c4c7c9"/>
</svg><svg class="abs" style="left:70px;top:211px" width="13" height="18" viewBox="0 0 13 18"><path d="M0 0 L12.5 8.7 L0 17.4 Z" fill="#499c54"/></svg><svg class="abs" style="left:55px;top:245px" width="13" height="18" viewBox="0 0 13 18"><path d="M0 0 L12.5 8.7 L0 17.4 Z" fill="#499c54"/></svg></div>
</div>

<div class="abs" style="left:133px;top:216px;width:221px;height:233px;border:3px solid #ff3838;z-index:5"></div>
</body></html>
